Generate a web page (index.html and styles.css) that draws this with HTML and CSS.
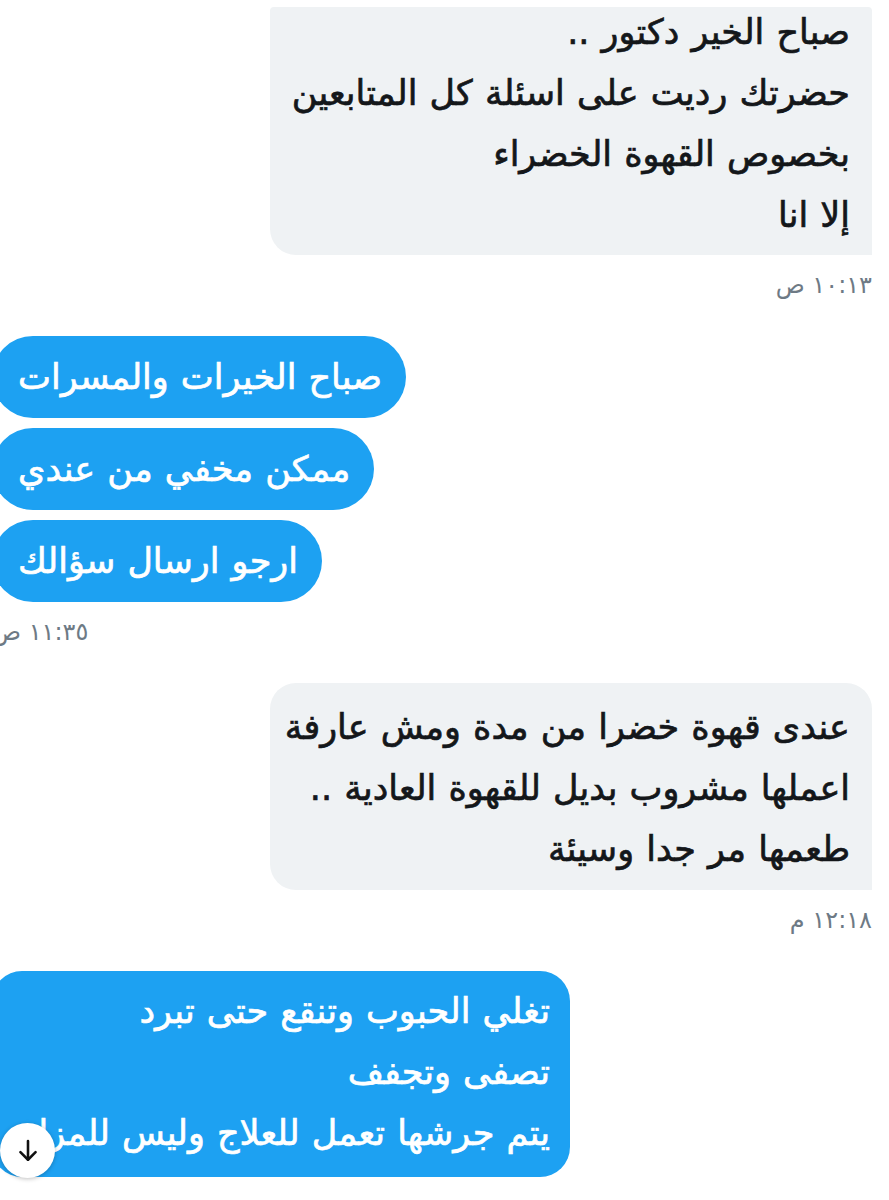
FILE: index.html
```html
<!DOCTYPE html>
<html lang="ar" dir="rtl">
<head>
    <meta charset="UTF-8">
    <meta name="viewport" content="width=device-width, initial-scale=1.0">
    <title>الرسائل</title>
    <link rel="stylesheet" href="styles.css">
</head>
<body>
    <div class="chat">
        <div class="group sent first">
            <div class="bubble gray tall">
                <p>صباح الخير دكتور ..</p>
                <p>حضرتك رديت على اسئلة كل المتابعين</p>
                <p>بخصوص القهوة الخضراء</p>
                <p>إلا انا</p>
            </div>
            <div class="time">١٠:١٣ ص</div>
        </div>

        <div class="group received">
            <div class="bubble blue short">صباح الخيرات والمسرات</div>
            <div class="bubble blue short">ممكن مخفي من عندي</div>
            <div class="bubble blue short">ارجو ارسال سؤالك</div>
            <div class="time">١١:٣٥ ص</div>
        </div>

        <div class="group sent">
            <div class="bubble gray">
                <p>عندى قهوة خضرا من مدة ومش عارفة</p>
                <p>اعملها مشروب بديل للقهوة العادية ..</p>
                <p>طعمها مر جدا وسيئة</p>
            </div>
            <div class="time">١٢:١٨ م</div>
        </div>

        <div class="group received">
            <div class="bubble blue wide">
                <p>تغلي الحبوب وتنقع حتى تبرد</p>
                <p>تصفى وتجفف</p>
                <p>يتم جرشها تعمل للعلاج وليس للمزاج</p>
            </div>
        </div>
    </div>

    <button class="scroll-down" aria-label="scroll down">
        <svg width="28" height="28" viewBox="0 0 24 24" fill="none" stroke="#111" stroke-width="2.2" stroke-linecap="round" stroke-linejoin="round">
            <path d="M12 3.5v16"/>
            <path d="M5.5 13L12 19.5 18.5 13"/>
        </svg>
    </button>
</body>
</html>
```

FILE: styles.css
```css
html, body {
    margin: 0;
    padding: 0;
    background: #fff;
}
body {
    width: 889px;
    height: 1200px;
    overflow: hidden;
    position: relative;
    font-family: "DejaVu Sans", "Noto Sans", sans-serif;
}
.chat {
    display: flex;
    flex-direction: column;
    padding-right: 17px;
}
.group {
    display: flex;
    flex-direction: column;
    gap: 10px;
    margin-bottom: 37px;
}
.group.sent {
    align-items: flex-start;
}
.group.received {
    align-items: flex-end;
    margin-left: -8px;
}
.group.first {
    margin-top: 7px;
}
.bubble p {
    margin: 0;
}
.bubble {
    font-size: 35px;
    line-height: 61px;
    word-spacing: 1px;
    -webkit-text-stroke: 0.7px currentColor;
    white-space: nowrap;
    overflow: hidden;
}
.gray {
    background: #eff2f4;
    color: #14171a;
    width: 558px;
    height: 181px;
    padding: 14px 22px 12px;
    border-radius: 26px 26px 0 26px;
}
.gray.tall {
    height: 236px;
    padding-top: 0;
    padding-bottom: 12px;
    border-radius: 4px 4px 0 26px;
}
.gray.tall p:first-child {
    margin-top: -5px;
}
.blue {
    background: #1da1f2;
    color: #fff;
}
.blue.short {
    height: 82px;
    line-height: 82px;
    padding: 0 24px 0 26px;
    border-radius: 41px;
}
.blue.wide {
    width: 538px;
    height: 183px;
    padding: 10px 20px 13px;
    border-radius: 30px;
}
.time {
    font-size: 24px;
    line-height: 28px;
    color: #6e7a85;
    margin-top: 6px;
}
.scroll-down {
    position: absolute;
    left: 0;
    top: 1123px;
    width: 55px;
    height: 55px;
    border-radius: 50%;
    border: none;
    background: #fff;
    box-shadow: 0 1px 4px rgba(0, 0, 0, 0.25);
    display: flex;
    align-items: center;
    justify-content: center;
    padding: 0;
}
```
